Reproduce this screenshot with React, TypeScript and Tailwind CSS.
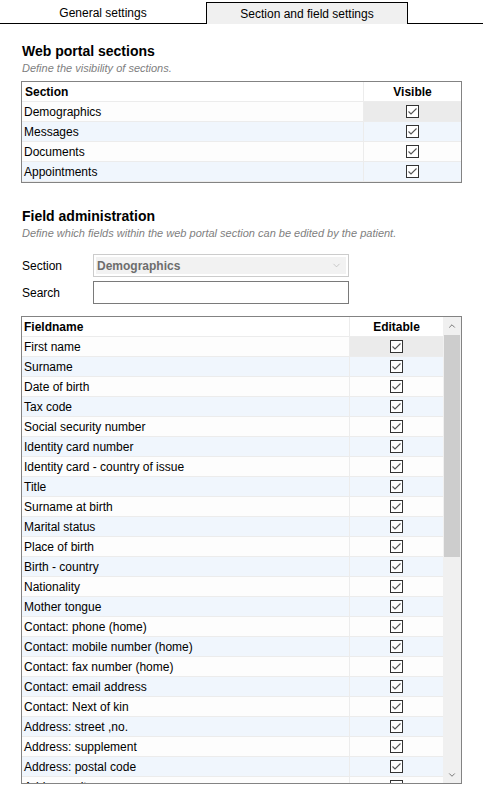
import { ChevronDown, ChevronUp } from "lucide-react";

const sections = ["Demographics", "Messages", "Documents", "Appointments"];

const fields = [
  "First name",
  "Surname",
  "Date of birth",
  "Tax code",
  "Social security number",
  "Identity card number",
  "Identity card - country of issue",
  "Title",
  "Surname at birth",
  "Marital status",
  "Place of birth",
  "Birth - country",
  "Nationality",
  "Mother tongue",
  "Contact: phone (home)",
  "Contact: mobile number (home)",
  "Contact: fax number (home)",
  "Contact: email address",
  "Contact: Next of kin",
  "Address: street ,no.",
  "Address: supplement",
  "Address: postal code",
  "Address: city",
];

function Check() {
  return (
    <svg width="13" height="13" viewBox="0 0 13 13" className="block">
      <rect x="0.5" y="0.5" width="12" height="12" fill="#fff" stroke="#333" />
      <path d="M2.5 6.5 L5 9 L10.5 3.5" fill="none" stroke="#555" strokeWidth="1.1" />
    </svg>
  );
}

function Row({ label, index, colClass }: { label: string; index: number; colClass: string }) {
  const bg = index % 2 === 0 ? "bg-[#fdfdfd]" : "bg-[#f0f6fd]";
  return (
    <div className={`flex h-[20px] shrink-0 border-b border-[#ececec] ${bg}`}>
      <div className="flex-1 pl-[2px] leading-[21px] truncate">{label}</div>
      <div
        className={`${colClass} flex items-center justify-center border-l border-[#ececec] ${
          index === 0 ? "bg-[#ebebeb]" : ""
        }`}
      >
        <Check />
      </div>
    </div>
  );
}

export default function App() {
  return (
    <div className="w-[483px] h-[796px] bg-white text-black text-[12px] overflow-hidden" style={{ fontFamily: '"Liberation Sans", Arial, sans-serif' }}>
      {/* tab strip */}
      <div className="flex h-[24px] items-end">
        <div className="w-[206px] h-[22px] border-b border-black flex items-center justify-center text-[12px] leading-[22px]">
          General settings
        </div>
        <div className="w-[202px] h-[22px] border border-b-0 border-black bg-[#f0f0f0] flex items-center justify-center">
          Section and field settings
        </div>
        <div className="flex-1 h-[22px] border-b border-black" />
      </div>

      <div className="px-[21px]">
        <h2 className="mt-[19px] ml-[1px] text-[14px] leading-[16px] font-bold">Web portal sections</h2>
        <p className="ml-[1px] mt-[2px] text-[11px] leading-[14px] italic text-[#808080]">Define the visibility of sections.</p>

        <div className="mt-[6px] border border-[#838383] flex flex-col">
          <div className="flex h-[20px] border-b border-[#ececec] bg-white font-bold">
            <div className="flex-1 pl-[3px] leading-[21px]">Section</div>
            <div className="w-[98px] text-center leading-[21px] border-l border-[#ececec]">Visible</div>
          </div>
          {sections.map((s, i) => (
            <Row key={s} label={s} index={i} colClass="w-[98px]" />
          ))}
        </div>

        <h2 className="mt-[25px] ml-[1px] text-[14px] leading-[16px] font-bold">Field administration</h2>
        <p className="ml-[1px] mt-[2px] text-[11px] leading-[14px] italic text-[#808080]">
          Define which fields within the web portal section can be edited by the patient.
        </p>

        <div className="mt-[14px] flex flex-col gap-[4px]">
          <div className="flex items-center">
            <span className="w-[72px] pl-[1px]">Section</span>
            <div className="w-[256px] h-[23px] border border-[#cccccc] p-[2px]">
              <div className="h-full bg-[#f2f2f2] flex items-center justify-between pl-[1px] pr-[4px] font-bold text-[#6d6d6d]">
                <span>Demographics</span>
                <ChevronDown size={11} strokeWidth={1.5} className="text-[#b5b5b5]" />
              </div>
            </div>
          </div>
          <div className="flex items-center">
            <span className="w-[72px] pl-[1px]">Search</span>
            <div className="w-[256px] h-[23px] border border-[#7a7a7a] bg-white" />
          </div>
        </div>

        <div className="mt-[12px] h-[468px] border border-[#838383] flex overflow-hidden">
          <div className="flex-1 flex flex-col overflow-hidden">
            <div className="flex h-[20px] shrink-0 border-b border-[#ececec] bg-white font-bold">
              <div className="flex-1 pl-[2px] leading-[21px]">Fieldname</div>
              <div className="w-[94px] text-center leading-[21px] border-l border-[#ececec]">Editable</div>
            </div>
            {fields.map((f, i) => (
              <Row key={f} label={f} index={i} colClass="w-[94px]" />
            ))}
          </div>
          {/* scrollbar */}
          <div className="w-[18px] bg-[#f0f0f0] flex flex-col items-center">
            <div className="h-[17px] flex items-center justify-center">
              <ChevronUp size={10} strokeWidth={2} className="text-[#606060]" />
            </div>
            <div className="w-[16px] h-[222px] mt-[1px] bg-[#cdcdcd]" />
            <div className="flex-1" />
            <div className="h-[17px] flex items-center justify-center">
              <ChevronDown size={10} strokeWidth={2} className="text-[#606060]" />
            </div>
          </div>
        </div>
      </div>
    </div>
  );
}
